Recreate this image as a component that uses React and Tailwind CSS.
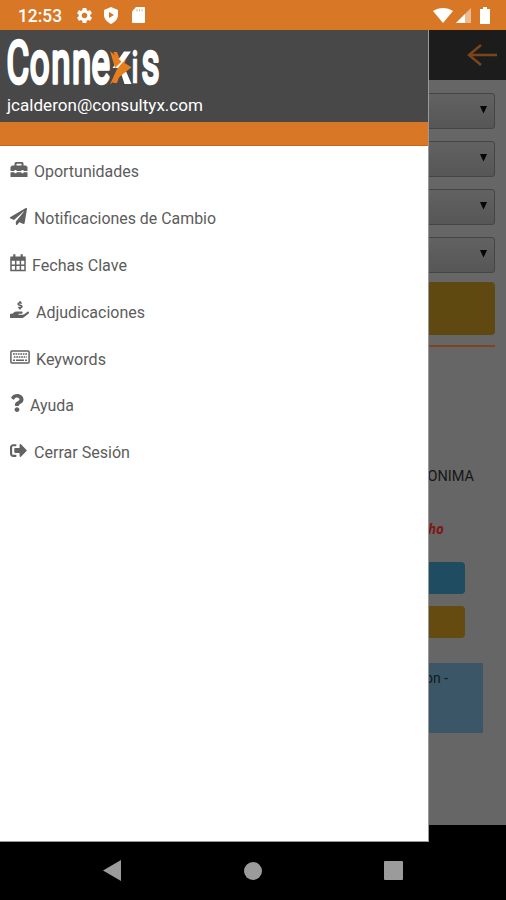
import { FaPaperPlane, FaHandHoldingUsd, FaQuestion, FaSignOutAlt } from 'react-icons/fa';
import { MdSettings } from 'react-icons/md';

function Keyboard({ className }) {
  return (
    <svg width="20" height="14" viewBox="0 0 20 14" className={className} fill="none" stroke="currentColor">
      <rect x="0.900" y="0.900" width="18.200" height="12.200" rx="1" strokeWidth="1.500" />
      <path d="M3 4h14M3.800 7h13" strokeWidth="1.700" strokeDasharray="1.700 0.750" />
      <path d="M3 10.200h2M6 10.200h8M15 10.200h2" strokeWidth="1.600" />
    </svg>
  );
}

function CalendarGrid({ className }) {
  return (
    <svg width="16" height="18" viewBox="0 0 16 18" className={className} fill="none" stroke="currentColor">
      <path d="M1 6h14v10.500H1zM1 11.200h14M5.700 6v10.500M10.400 6v10.500" strokeWidth="1.500" />
      <path d="M0.300 4.300h15.400" strokeWidth="3.600" />
      <path d="M4.300 0.300v3M11.700 0.300v3" strokeWidth="2.200" />
    </svg>
  );
}

function Briefcase({ className }) {
  return (
    <svg width="18" height="15" viewBox="0 0 18 15" className={className} fill="currentColor">
      <path fillRule="evenodd" d="M4.500 3.500V1.500Q4.500 0 6 0h6Q13.500 0 13.500 1.500v2h2.500L17.500 5v4h-4V8h-2v1h-5V8h-2v1h-4V5L2 3.500ZM6.500 1.800v1.700h5V1.800Z" />
      <path d="M0.500 10.200h4v1h2v-1h5v1h2v-1h4V15h-17Z" />
    </svg>
  );
}

const menu = [
  { label: 'Oportunidades', icon: Briefcase, w: 'w-[24px]', tw: 105 },
  { label: 'Notificaciones de Cambio', icon: FaPaperPlane, w: 'w-[24px]', tw: 182 },
  { label: 'Fechas Clave', icon: CalendarGrid, w: 'w-[22px]', tw: 95 },
  { label: 'Adjudicaciones', icon: FaHandHoldingUsd, w: 'w-[26px]', tw: 109, size: 19 },
  { label: 'Keywords', icon: Keyboard, w: 'w-[26px]', tw: 70 },
  { label: 'Ayuda', icon: FaQuestion, w: 'w-[20px]', tw: 44, size: 18 },
  { label: 'Cerrar Sesión', icon: FaSignOutAlt, w: 'w-[24px]', tw: 96 },
];

function Logo() {
  return (
    <svg width="156" height="52" viewBox="0 0 156 52" className="block overflow-visible">
      <g transform="translate(0 47) scale(0.58 1)">
        <text y="0" fontFamily="Roboto, sans-serif" fontWeight="400" fontSize="60" fill="#fff" stroke="#fff" strokeWidth="3.600" strokeLinejoin="round">
          <tspan x="1 41 78 114 147.500">Conne</tspan><tspan x="183" fill="#e87d1c" stroke="none">x</tspan><tspan x="216.500" fontSize="45" fontWeight="700" strokeWidth="0.500">i</tspan><tspan x="233.500">s</tspan>
        </text>
      </g>
      <path d="M118 15.500h7l-12 16.500h-6.500ZM115 37 119 33l6.500 15h-7Z" fill="#fff" />
      <path d="M104 15 115.500 25.500 109 32ZM117 26l8.500 5.300L104 48.500l7-15.500Z" fill="#e87d1c" />
    </svg>
  );
}

function Select() {
  return (
    <div className="flex h-9 items-center justify-end rounded-[3px] border border-[#454545] bg-linear-to-b from-[#626262] to-[#565656] pr-[6px]">
      <svg width="9" height="8" viewBox="0 0 9 8" className="-mt-[2px]"><path d="M1 0h7L4.500 7.500Z" fill="#050505" /></svg>
    </div>
  );
}

export default function App() {
  return (
    <div className="relative flex h-[900px] w-[506px] flex-col overflow-hidden bg-black font-['Roboto',sans-serif]">
      <div className="flex h-[30px] shrink-0 items-center bg-[#d87726] pl-[18px] pr-[16px] text-white">
        <svg width="57" height="22" viewBox="0 0 57 22"><text x="0" y="18" fontSize="18" fontWeight="500" fill="#fff" textLength="44" lengthAdjust="spacingAndGlyphs">12:53</text></svg>
        <MdSettings size={19} />
        <svg width="16" height="17" viewBox="0 0 16 17" className="ml-[9px]"><path d="M8 0 15 3v5c0 4-3 7-7 9-4-2-7-5-7-9V3Z" fill="#fff" /><path d="M6 5v6l5-3Z" fill="#d87726" /></svg>
        <svg width="13" height="16" viewBox="0 0 13 16" className="ml-[13px]"><path d="M4 0h8q1 0 1 1v14q0 1-1 1H1q-1 0-1-1V4.500Z" fill="#fff" /><path d="M5 2v2.500M7.500 2v2.500M10 2v2.500" stroke="#e9b48a" /></svg>
        <div className="ml-auto flex items-center gap-[3px]">
          <svg width="20" height="15" viewBox="0 0 20 15"><path d="M0 3C6-1 14-1 20 3L10 15Z" fill="#fff" /></svg>
          <svg width="15" height="15" viewBox="0 0 15 15"><path d="M0 15 15 0v15Z" fill="#ebbb91" /><path d="M0 15 9 6v9Z" fill="#fff" /></svg>
          <svg width="10" height="17" viewBox="0 0 10 17" className="ml-[6px]"><path d="M3 0h4v2h3v15H0V2h3Z" fill="#fff" /></svg>
        </div>
      </div>

      <div className="flex h-[50px] shrink-0 items-center justify-end bg-[#1c1c1c] pr-[9px]">
        <svg width="30" height="22" viewBox="0 0 30 22" fill="none" stroke="#7a4518" strokeWidth="2.500"><path d="M30 11H2M14 1 2 11l12 10" /></svg>
      </div>
      <main className="flex h-[745px] shrink-0 flex-col bg-[#666] px-[11px] pt-[13px]">
        <div className="flex flex-col gap-[12px]">
          <Select /><Select /><Select /><Select />
        </div>
        <div className="mt-[9px] h-[53px] rounded-[4px] bg-[#604811]" />
        <div className="mt-[10px] h-[2px] bg-[#804321]" />
        <div className="mt-[120px] h-[20px] pr-[21px] text-right text-[14.5px] leading-[20px] text-[#171717]">ONIMA</div>
        <div className="mt-[32px] h-[20px] pr-[51px] text-right font-['Open_Sans',sans-serif] text-[13.5px] font-bold italic leading-[20px] text-[#7e1717]">ho</div>
        <div className="mr-[30px] mt-[23px] h-8 rounded-[4px] bg-[#204c62]" />
        <div className="mr-[30px] mt-[12px] h-8 rounded-[4px] bg-[#654b10]" />
        <div className="mr-[12px] mt-[25px] h-[70px] bg-[#3b5666] pr-[35px] pt-[5px] text-right text-[14px] leading-[20px] text-[#101b22]">on -</div>
      </main>
      <nav className="flex h-[75px] shrink-0 items-end px-[103px] pb-[19px]">
        <div className="flex w-full items-center justify-between">
          <svg width="19" height="21" viewBox="0 0 19 21"><path d="M0 10.500 18 0v21Z" fill="#9b9b9b" /></svg>
          <div className="size-[18px] rounded-full bg-[#9b9b9b]" />
          <div className="size-[19px] rounded-[1px] bg-[#9b9b9b]" />
        </div>
      </nav>

      <aside className="absolute left-0 top-[30px] flex h-[812px] w-[429px] flex-col border-b border-r border-[#999] bg-white">
        <div className="flex h-[92px] shrink-0 flex-col bg-[#484848] pl-[6px] pt-[6px]">
          <Logo />
          <svg width="200" height="26" viewBox="0 0 200 26" className="mt-[3px] block"><text x="1" y="20" fontSize="17" fill="#fff" textLength="196" lengthAdjust="spacingAndGlyphs">jcalderon@consultyx.com</text></svg>
        </div>
        <div className="h-[24px] shrink-0 border-b border-[#cf6515] bg-[#d87726]" />
        <ul className="flex flex-col pl-[10px] pt-px">
          {menu.map(({ label, icon: Icon, w, tw, size = 17 }) => (
            <li key={label} className="flex h-[46.8px] items-center">
              <span className={`${w} shrink-0 pb-[2px]`}>
                <Icon size={size} className={`text-[#626262] ${label === 'Ayuda' ? '-ml-[2px]' : ''}`} />
              </span>
              <svg width={tw + 2} height="22" viewBox={`0 0 ${tw + 2} 22`}><text x="0" y="17.500" fontSize="16" fill="#5c5c5c" textLength={tw} lengthAdjust="spacingAndGlyphs">{label}</text></svg>
            </li>
          ))}
        </ul>
      </aside>
    </div>
  );
}
